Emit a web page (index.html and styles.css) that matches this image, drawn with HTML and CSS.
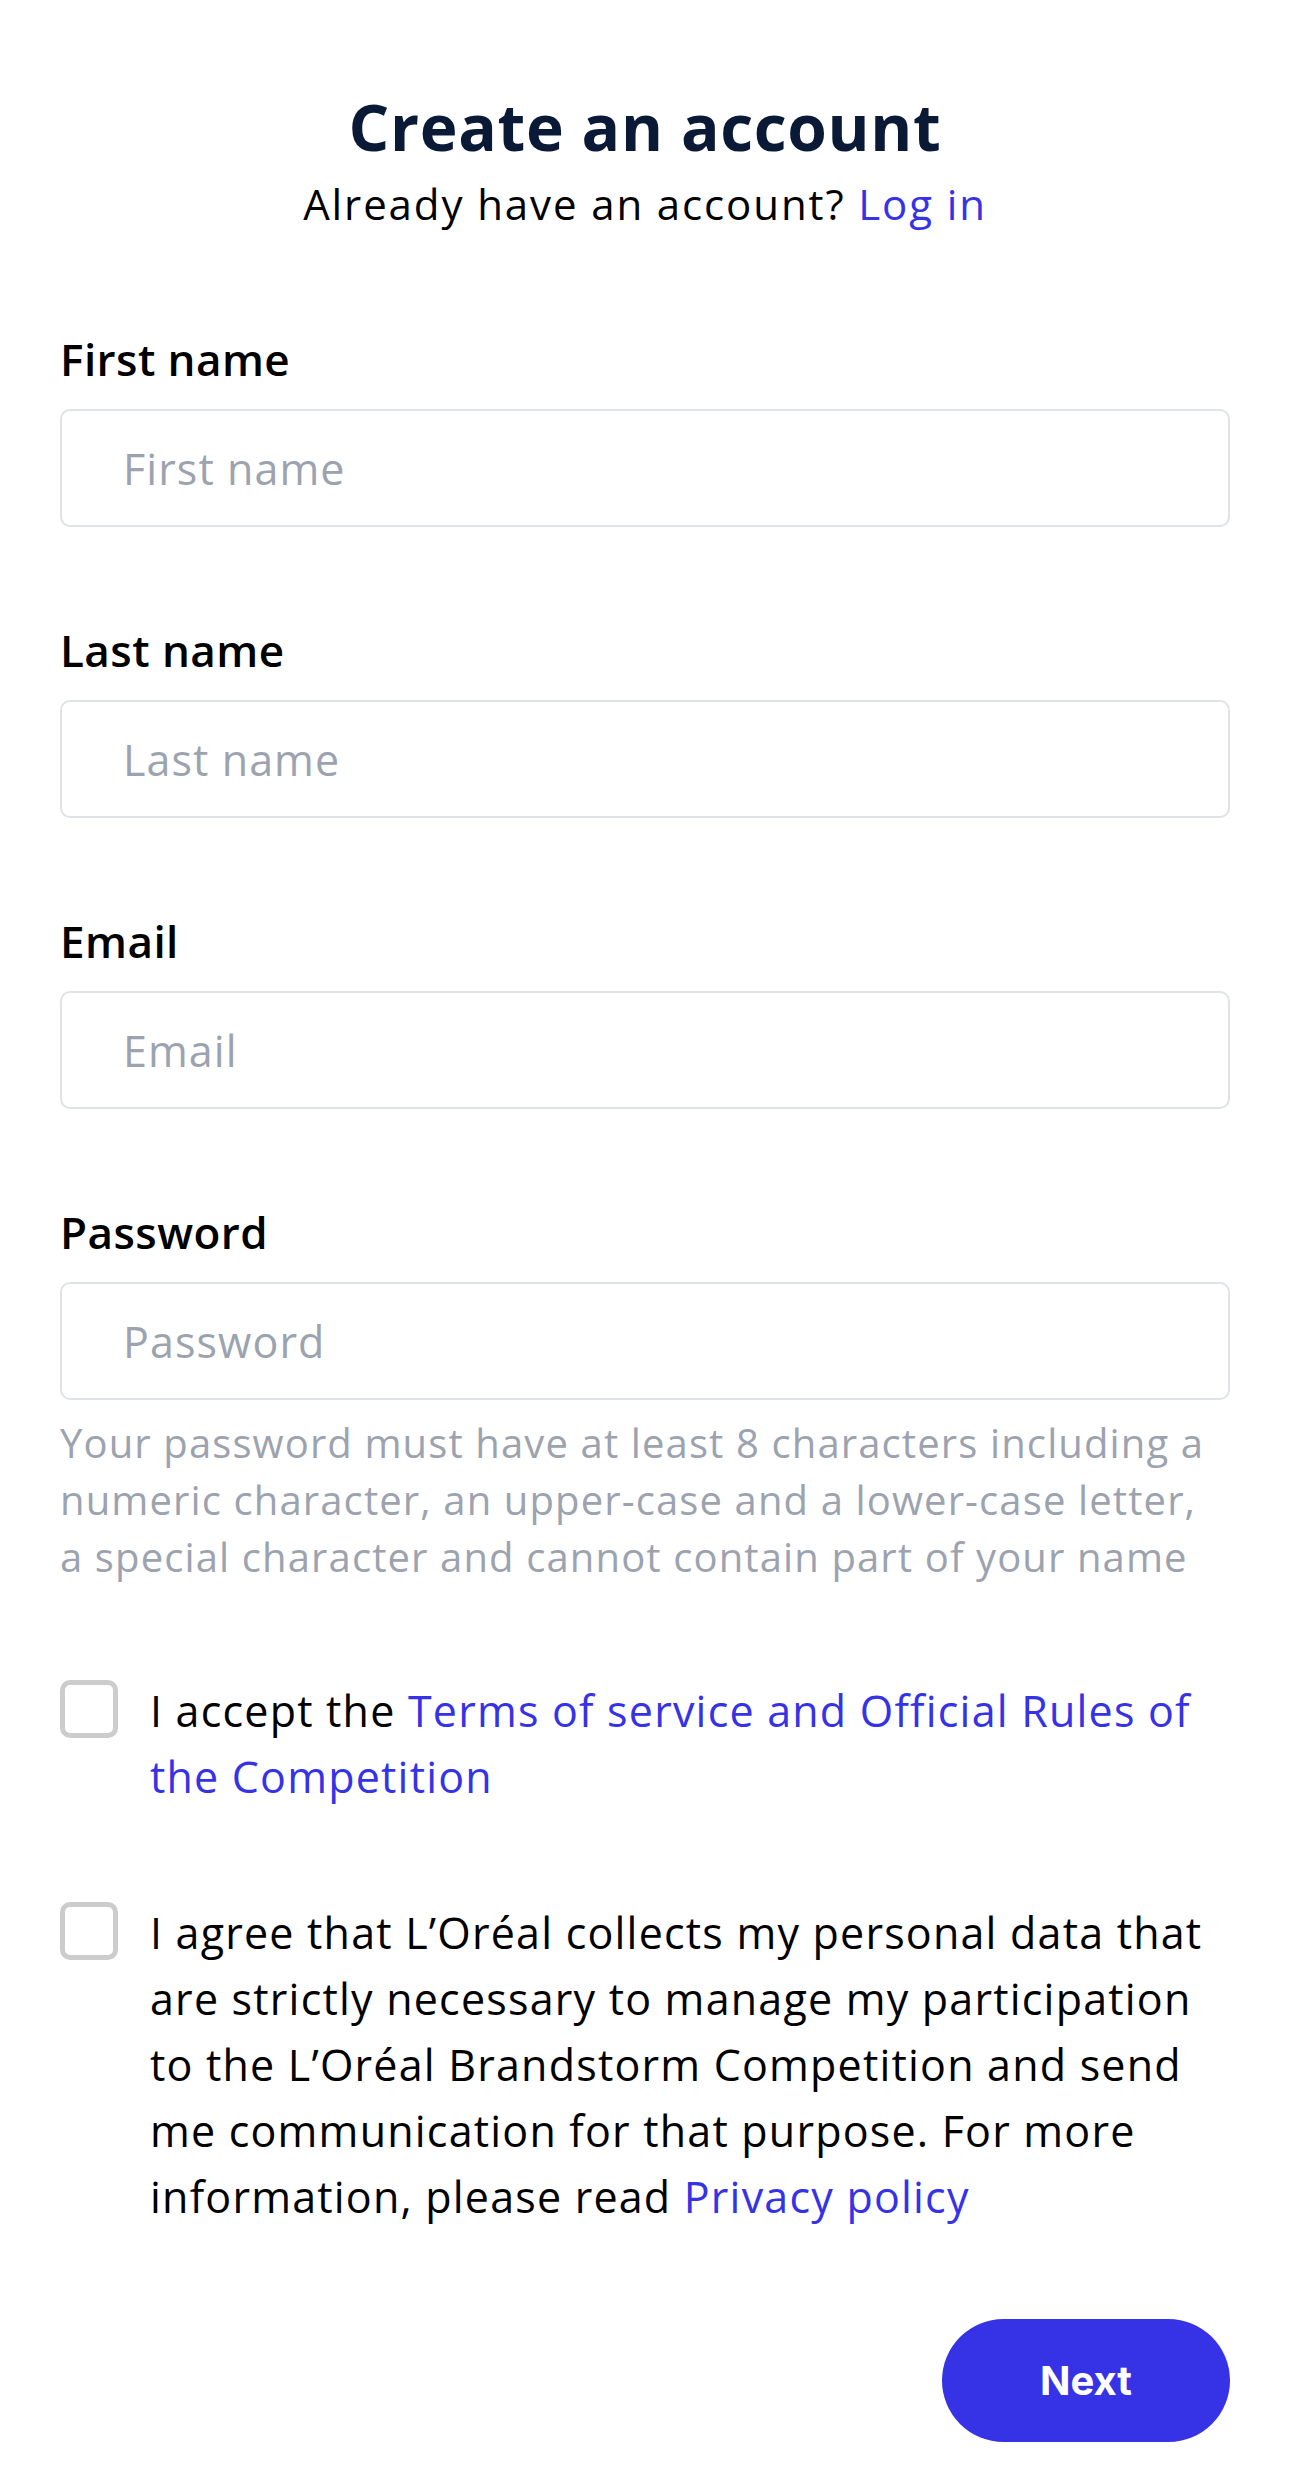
FILE: index.html
```html
<!DOCTYPE html>
<html lang="en">
<head>
<meta charset="utf-8">
<title>Create an account</title>
<link rel="stylesheet" href="styles.css">
</head>
<body>
<main class="page">
  <header class="head">
    <h1 class="title">Create an account</h1>
    <p class="sub"><span>Already have an account? </span><a class="link" href="#">Log in</a></p>
  </header>
  <form class="form">
    <div class="field">
      <label class="label" for="fn">First name</label>
      <input class="input" id="fn" type="text" placeholder="First name">
    </div>
    <div class="field">
      <label class="label" for="ln">Last name</label>
      <input class="input" id="ln" type="text" placeholder="Last name">
    </div>
    <div class="field">
      <label class="label" for="em">Email</label>
      <input class="input" id="em" type="email" placeholder="Email">
    </div>
    <div class="field field-last">
      <label class="label" for="pw">Password</label>
      <input class="input" id="pw" type="password" placeholder="Password">
      <p class="hint">Your password must have at least 8 characters including a numeric character, an upper-case and a lower-case letter, a special character and cannot contain part of your name</p>
    </div>
    <label class="check">
      <input class="box" type="checkbox">
      <span class="check-text"><span>I accept the </span><a class="link" href="#">Terms of service and Official Rules of the Competition</a></span>
    </label>
    <label class="check">
      <input class="box" type="checkbox">
      <span class="check-text"><span>I agree that L’Oréal collects my personal data that are strictly necessary to manage my participation to the L’Oréal Brandstorm Competition and send me communication for that purpose. For more information, please read </span><a class="link" href="#">Privacy policy</a></span>
    </label>
    <div class="actions">
      <button class="next" type="button">Next</button>
    </div>
  </form>
</main>
</body>
</html>
```
FILE: styles.css
```css
html, body {
  margin: 0;
  background: #ffffff;
}
body {
  font-family: "Open Sans", "Noto Sans", sans-serif;
  color: #000000;
}
.page {
  padding: 89px 60px 31px;
  display: flex;
  flex-direction: column;
}
.head {
  text-align: center;
}
.title {
  margin: 0;
  font-size: 64px;
  line-height: 76px;
  font-weight: 700;
  color: #0a1935;
  letter-spacing: 0.01em;
}
.sub {
  margin: 12px 0 0;
  font-size: 42px;
  line-height: 54px;
  letter-spacing: 0.045em;
}
.link {
  color: #3632e6;
  text-decoration: none;
}
.form {
  margin-top: 100px;
  display: flex;
  flex-direction: column;
  gap: 93px;
}
.field {
  display: flex;
  flex-direction: column;
  gap: 22px;
  margin-bottom: 2px;
}
.field-last {
  margin-bottom: 0;
}
.label {
  font-size: 44px;
  line-height: 56px;
  font-weight: 600;
  letter-spacing: 0.01em;
}
.input {
  box-sizing: border-box;
  height: 118px;
  width: 100%;
  margin: 0;
  border: 2px solid #dfe2e6;
  border-radius: 10px;
  padding: 0 0 0 61px;
  font-family: inherit;
  font-size: 43px;
  letter-spacing: 0.025em;
  color: #000;
  background: #fff;
  outline: none;
}
.input::placeholder {
  color: #9ca3af;
}
.hint {
  margin: -8px 0 0;
  font-size: 40px;
  line-height: 57px;
  color: #9ca3af;
  letter-spacing: 0.028em;
}
.check {
  display: flex;
  align-items: flex-start;
  gap: 32px;
}
.check + .check {
  margin-top: -3px;
}
.box {
  appearance: none;
  -webkit-appearance: none;
  flex: none;
  box-sizing: border-box;
  width: 58px;
  height: 58px;
  margin: 2px 0 0;
  border: 5px solid #cccccc;
  border-radius: 10px;
  background: #fff;
}
.check-text {
  font-size: 43px;
  line-height: 66px;
  letter-spacing: 0.028em;
}
.actions {
  display: flex;
  justify-content: flex-end;
  margin-top: -4px;
}
.next {
  width: 288px;
  height: 123px;
  border: 0;
  border-radius: 62px;
  background: #3632e6;
  color: #ffffff;
  font-family: Inter, "Liberation Sans", sans-serif;
  font-weight: 700;
  font-size: 40px;
}
```
